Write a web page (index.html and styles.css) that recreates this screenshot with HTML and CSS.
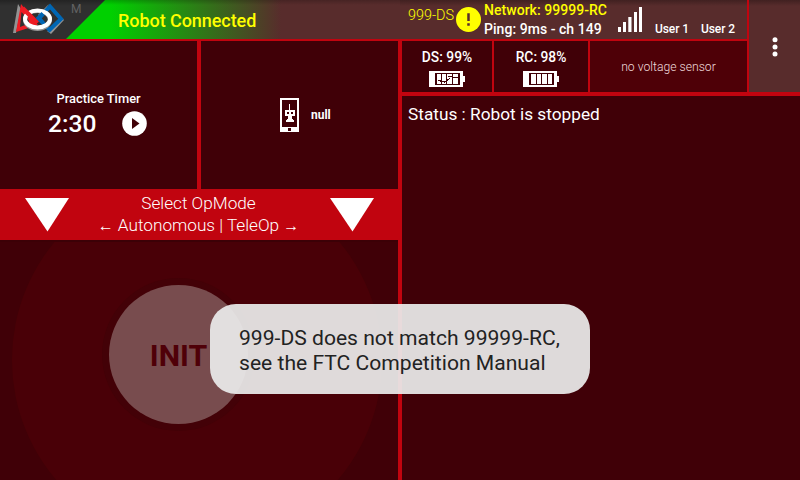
FILE: index.html
```html
<!DOCTYPE html>
<html lang="en">
<head>
<meta charset="utf-8">
<title>Driver Station</title>
<link rel="stylesheet" href="styles.css">
</head>
<body>
<div class="app">
  <header class="top">
    <div class="bar">
      <div class="brand">
        <svg class="logo" viewBox="0 0 56 34" width="56" height="34">
          <path d="M5 1 0 30 3 30 8 6Z" fill="#929292"/>
          <path d="M34 28 38 31 51 17 49 15 37 28Z" fill="#929292"/>
          <path d="M36 1 25 12 28 14Z" fill="#929292"/>
          <path d="M8 1 25 22 3 29ZM8.500 9 7 24 15 21 16 18Z" fill="#ed1c24" fill-rule="evenodd"/>
          <path d="M37 3.500 48 16 36.500 27 26 15.500Z" fill="none" stroke="#0066b3" stroke-width="4"/>
          <ellipse cx="24.500" cy="17" rx="12.500" ry="9" fill="none" stroke="#929292" stroke-width="4"/>
          <ellipse cx="24.500" cy="16" rx="12.500" ry="8.500" fill="none" stroke="#fff" stroke-width="4"/>
          <path d="M9.500 5 24.500 20" fill="none" stroke="#ed1c24" stroke-width="4.500"/>
          <path d="M30 10.500 25.500 15 30 20" fill="none" stroke="#0066b3" stroke-width="4"/>
        </svg>
        <span class="mode">M</span>
      </div>
      <div class="state">Robot Connected</div>
      <div class="device">999-DS</div>
      <svg class="warn" viewBox="0 0 24 24" width="25" height="25"><circle cx="12" cy="12" r="12" fill="#ff0"/><path d="M10.800 6h2.400v7.500h-2.400zM10.800 15.500h2.400V18h-2.400z" fill="#582c2c"/></svg>
      <div class="net"><div class="network">Network: 99999-RC</div><div class="ping">Ping: 9ms - ch 149</div></div>
      <svg class="signal" viewBox="0 0 24 25" width="24" height="25"><path d="M0 20h3v5H0zM5 15h3v10H5zM10.300 10h3.200v15h-3.200zM16 5h3v20h-3zM21 0h3v25h-3z" fill="#fff"/></svg>
      <div class="user user1">User 1</div>
      <div class="user">User 2</div>
    </div>
    <div class="menu-top"></div>
  </header>
  <main class="main">
    <section class="left">
      <div class="tools">
        <div class="timer">
          <div class="timer-title">Practice Timer</div>
          <div class="timer-row"><span class="time">2:30</span>
            <svg viewBox="0 0 25 25" width="25" height="25"><circle cx="12.500" cy="12.500" r="12.300" fill="#fff"/><path d="M10 7v11l7.500-5.500z" fill="#400007"/></svg>
          </div>
        </div>
        <div class="config">
          <svg viewBox="0 0 19 34" width="19" height="34" shape-rendering="crispEdges"><path d="M0 0h19v34H0zM2 2v27h15V2zM8 30v3h3v-3z" fill="#fff" fill-rule="evenodd"/><path d="M9 6h1v7H9zM5 12h10v6H5zM8 17h4v5H8zM7 21h6v2H7zM6 22h8v2H6z" fill="#fff"/><path d="M7 14h2v2H7zM11 14h2v2h-2z" fill="#400007"/></svg>
          <span>null</span>
        </div>
      </div>
      <div class="opmode">
        <svg viewBox="0 0 44 34" width="44" height="34"><path d="M0 0h44L22.500 33.500z" fill="#fff"/></svg>
        <div class="op-text"><div>Select OpMode</div><div class="op-types"><span class="arrow">←</span> Autonomous | TeleOp <span class="arrow">→</span></div></div>
        <svg viewBox="0 0 44 34" width="44" height="34"><path d="M0 0h44L22.500 33.500z" fill="#fff"/></svg>
      </div>
      <div class="control"><div class="halo"></div><div class="init">INIT</div></div>
    </section>
    <section class="right">
      <div class="meters">
        <div class="meter ds"><div>DS: 99%</div>
          <svg viewBox="0 0 36 16" width="36" height="16" shape-rendering="crispEdges"><path d="M0 0h34v5h2v6h-2v5H0zM6 2v12h25V2z" fill="#fff" fill-rule="evenodd"/><path d="M8 3h4v10H8zM13 3h4v10h-4zM18 3h5v10h-5zM24 3h5v10h-5z" fill="#fff"/><path d="m9 9 5 2 4-1m1-5 4 1 6 1M15 12l6-5" fill="none" stroke="#400007"/></svg>
        </div>
        <div class="meter rc"><div>RC: 98%</div>
          <svg viewBox="0 0 36 16" width="36" height="16" shape-rendering="crispEdges"><path d="M0 0h34v5h2v6h-2v5H0zM6 2v12h25V2z" fill="#fff" fill-rule="evenodd"/><path d="M8 3h5v10H8zM14 3h4v10h-4zM19 3h5v10h-5zM25 3h4v10h-4z" fill="#fff"/></svg>
        </div>
        <div class="voltage">no voltage sensor</div>
        <div class="menu"><svg viewBox="0 0 6 20" width="6" height="20"><g fill="#fff"><circle cx="3" cy="2.700" r="2.500"/><circle cx="3" cy="9.900" r="2.500"/><circle cx="3" cy="17.100" r="2.500"/></g></svg></div>
      </div>
      <div class="telemetry">Status : Robot is stopped</div>
    </section>
  </main>
  <div class="toast"><div class="t1">999-DS does not match 99999-RC,</div><div class="t2">see the FTC Competition Manual</div></div>
</div>
</body>
</html>
```
FILE: styles.css
```css
* { box-sizing: border-box; }
body { margin: 0; background: #400007; color: #fff; font-family: Roboto, sans-serif; overflow: hidden; }
svg { display: block; flex: none; }
.app { width: 800px; height: 480px; display: flex; flex-direction: column; position: relative; }
.top { display: flex; height: 41px; }
.bar { width: 747px; display: flex; background: linear-gradient(#0004, #0000 6px), #582c2c; border-bottom: 2px solid #c1040f; white-space: nowrap; }
.brand { width: 105px; height: 39px; margin-right: -39px; padding: 3px 0 0 13px; display: flex; background: linear-gradient(#0004, #0000 6px), #303030; clip-path: polygon(0 0, 100% 0, 66px 100%, 0 100%); position: relative; z-index: 1; }
.mode { font-size: 12px; line-height: 14px; margin-left: 2px; margin-top: -1px; color: #626262; }
.state { width: 334px; height: 39px; padding-left: 52px; font-size: 18px; letter-spacing: -.06px; font-weight: 500; line-height: 41px; color: #ff0; background: linear-gradient(#0003, #0000 5px), linear-gradient(90deg, #00d000 45px, #582c2c 215px); }
.device { width: 56px; padding-left: 8px; font-size: 14.400px; font-weight: 300; line-height: 31px; color: #ff0; }
.warn { margin-top: 7px; }
.net { width: 137px; padding-left: 3px; font-size: 14px; letter-spacing: .04px; font-weight: 500; line-height: 19px; padding-top: 1px; }
.network { color: #ff0; }
.signal { margin-top: 7px; }
.user { font-size: 12px; letter-spacing: -.1px; font-weight: 500; line-height: 14px; padding-top: 22px; }
.user1 { width: 59px; padding-left: 13px; }
.menu-top { width: 53px; border-left: 2px solid #c1040f; background: linear-gradient(#0004, #0000 6px), #582c2c; }
.main { display: flex; height: 439px; }
.left { width: 402px; border-right: 4px solid #c1040f; }
.tools { display: flex; height: 148px; }
.timer { width: 201px; border-right: 4px solid #c1040f; padding-top: 49px; }
.timer-title { text-align: center; font-size: 12.900px; font-weight: 500; line-height: 17px; }
.timer-row { display: flex; align-items: center; padding: 2px 0 0 48px; }
.time { width: 74px; font-size: 24.600px; font-weight: 500; line-height: 26px; padding-top: 2px; }
.config { flex: 1; display: flex; align-items: center; padding-left: 79px; gap: 12px; font-size: 12px; font-weight: 700; }
.opmode { height: 51px; background: #c1040f; display: flex; justify-content: space-between; padding: 9px 24px 0 25px; }
.op-text { margin-top: -6px; margin-left: -2px; text-align: center; font-size: 17.200px; font-weight: 300; line-height: 22px; white-space: nowrap; }
.arrow { font-size: 16px; }
.control { position: relative; height: 240px; overflow: hidden; border-top: 2px solid #3c0006; }
.halo { position: absolute; left: 12px; top: -67px; width: 370px; height: 370px; border-radius: 50%; background: #490007; }
.init { position: absolute; left: 109px; top: 43px; width: 139px; height: 139px; border-radius: 50%; background: #784c4e; box-shadow: 0 0 0 7px #430107; color: #4f0008; text-align: center; font-size: 30.300px; font-weight: 700; line-height: 141px; }
.right { width: 398px; }
.meters { display: flex; height: 55px; border-bottom: 4px solid #c1040f; }
.meter { display: flex; flex-direction: column; align-items: center; border-right: 2px solid #c1040f; font-size: 13.800px; font-weight: 500; line-height: 16px; padding-top: 8px; gap: 6px; }
.ds { width: 92px; }
.rc { width: 96px; }
.voltage { width: 157px; background: #4e0007; color: #f0dcdd; text-align: center; font-size: 12.200px; line-height: 52px; font-weight: 300; }
.menu { width: 53px; border-left: 2px solid #c1040f; background: #582c2c; padding: 0 0 31px 23px; margin-top: -5px; }
.menu svg { margin-top: 1px; }
.telemetry { padding: 7px 6px; font-size: 17.250px; line-height: 22px; }
.toast { position: absolute; left: 210px; top: 304px; width: 380px; height: 90px; border-radius: 26px; background: rgba(235, 235, 235, .93); padding: 21px 0 0 29px; color: #222; font-size: 21.100px; line-height: 25px; white-space: nowrap; }
```
